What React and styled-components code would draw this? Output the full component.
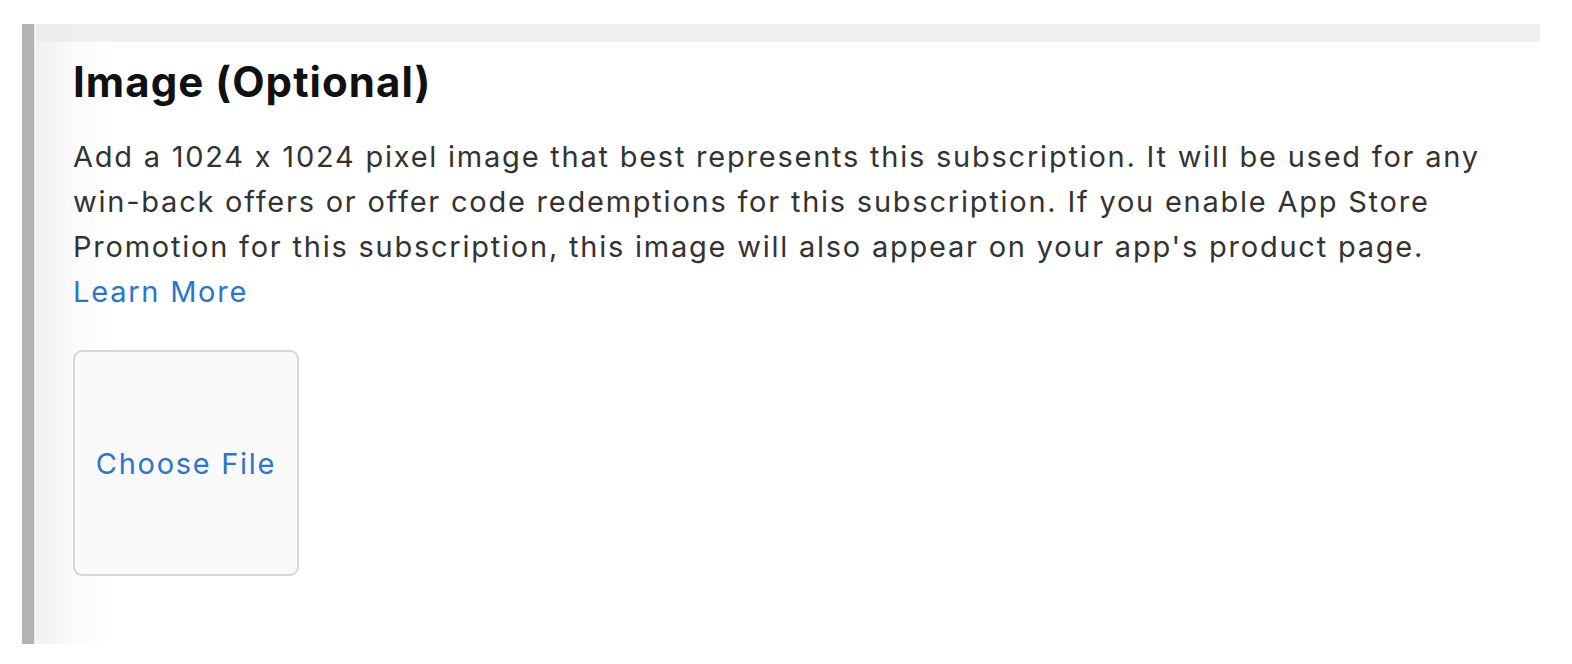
import React from 'react';
import styled, { createGlobalStyle } from 'styled-components';

const GlobalStyle = createGlobalStyle`
  html, body {
    margin: 0;
    padding: 0;
    background: #ffffff;
  }
  body {
    font-family: Inter, "Liberation Sans", Arial, sans-serif;
  }
`;

const Page = styled.div`
  padding: 24px 32px 20px 22px;
`;

const Panel = styled.section`
  display: flex;
  height: 620px;
  border-left: 12px solid #b3b3b3;
  box-sizing: border-box;
`;

const Edge = styled.div`
  width: 2px;
  background: linear-gradient(to right, #e4e4e4, #ffffff);
`;

const Body = styled.div`
  flex: 1;
  display: flex;
  flex-direction: column;
  background: linear-gradient(to right, #f1f1f1 0px, #fbfbfb 40px, #ffffff 75px);
`;

const TopStrip = styled.div`
  height: 18px;
  background: linear-gradient(to right, #ececec, #f0f0f0 60px);
`;

const Content = styled.div`
  padding: 14px 30px 0 37px;
`;

const Title = styled.h2`
  margin: 0;
  font-size: 42px;
  line-height: 52px;
  font-weight: 700;
  color: #111111;
  letter-spacing: 1.05px;
`;

const Description = styled.p`
  margin: 26px 0 0;
  font-size: 29px;
  line-height: 45px;
  color: #333333;
  letter-spacing: 1.77px;
`;

const Link = styled.a`
  display: block;
  color: #2d74cc;
  text-decoration: none;
`;

const FileButton = styled.button`
  margin-top: 36px;
  width: 226px;
  height: 226px;
  border: 2px solid #d6d6d6;
  border-radius: 9px;
  background: #f9f9f9;
  color: #2d74cc;
  font-family: inherit;
  font-size: 29px;
  letter-spacing: 1.7px;
  padding: 0;
  cursor: pointer;
`;

export default function App() {
  return (
    <Page>
      <GlobalStyle />
      <Panel>
        <Edge />
        <Body>
          <TopStrip />
          <Content>
            <Title>Image (Optional)</Title>
            <Description>
              Add a 1024 x 1024 pixel image that best represents this subscription. It will be used for any
              win-back offers or offer code redemptions for this subscription. If you enable App Store
              Promotion for this subscription, this image will also appear on your app's product page.
              <Link href="#">Learn More</Link>
            </Description>
            <FileButton type="button">Choose File</FileButton>
          </Content>
        </Body>
      </Panel>
    </Page>
  );
}
